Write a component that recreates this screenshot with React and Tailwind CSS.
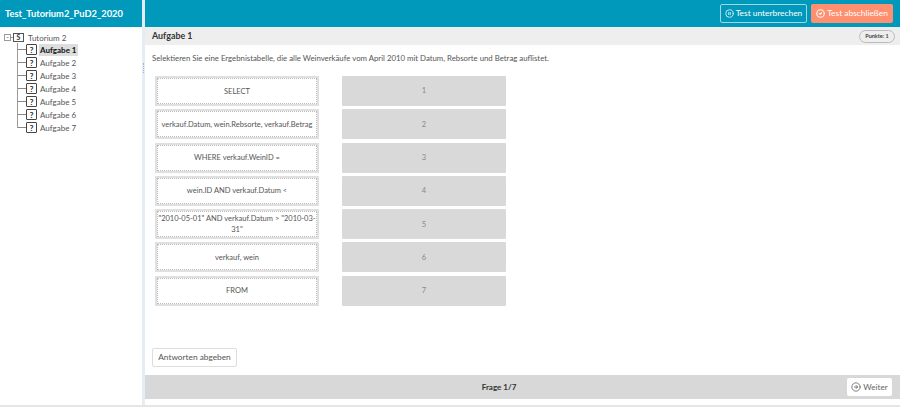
import React from "react";
import { CirclePause, CircleCheck, CircleArrowRight } from "lucide-react";

const font = "font-['Lato','Open_Sans',sans-serif]";

const answers = [
  "SELECT",
  "verkauf.Datum, wein.Rebsorte, verkauf.Betrag",
  "WHERE verkauf.WeinID =",
  "wein.ID AND verkauf.Datum <",
  "\"2010-05-01\" AND verkauf.Datum > \"2010-03-31\"",
  "verkauf, wein",
  "FROM",
];

const questions = ["Aufgabe 1", "Aufgabe 2", "Aufgabe 3", "Aufgabe 4", "Aufgabe 5", "Aufgabe 6", "Aufgabe 7"];

// Tree sidebar with the connector lines
const Tree = () => (
  <div className="pl-[4px] pt-[4px] text-[8px] text-[#555]">
    <div className="flex h-[13px] items-center">
      <span className="flex h-[7px] w-[7px] items-center justify-center border border-[#999] text-[7px] leading-none">-</span>
      <span className="h-px w-[2px] bg-[#999]" />
      <span className="flex h-[9px] w-[11px] items-center justify-center border border-[#555] text-[7px] font-bold leading-none text-[#333]">S</span>
      <span className="ml-[4px]">Tutorium 2</span>
    </div>
    <div className="ml-[13px] mt-[-1px] h-[85px] border-l border-[#999]">
      {questions.map((q, i) => (
        <div key={q} className="flex h-[13px] items-center">
          <span className="h-px w-[8px] bg-[#888]" />
          <span className="flex h-[11px] w-[11px] items-center justify-center rounded-[1px] border border-[#444] bg-white text-[8px] font-bold leading-none text-[#222]">?</span>
          <span className={i === 0 ? "ml-[2px] bg-[#ddd] px-[1px] font-bold text-[#111]" : "ml-[2px] px-[1px]"}>{q}</span>
        </div>
      ))}
    </div>
  </div>
);

export default function App() {
  return (
    <div className={`${font} flex h-[407px] w-[900px] flex-col overflow-hidden bg-white`}>
      <div className="flex h-[405px]">
        {/* Left panel */}
        <div className="w-[142px] shrink-0">
          <div className="flex h-[27px] items-center bg-[#0099bb] pl-[5px] text-[9.3px] font-bold text-white">
            Test_Tutorium2_PuD2_2020
          </div>
          <Tree />
        </div>
        <div className="flex w-[3px] shrink-0 justify-center bg-[#e4ecf5]">
          <span className="mt-[63px] h-[10px] border-l border-dotted border-[#9db4cc]" />
        </div>

        {/* Main panel */}
        <div className="flex min-w-0 flex-1 flex-col">
          <div className="flex h-[27px] items-center justify-end gap-[4px] bg-[#0099bb] pr-[7px] text-[8.4px]">
            <button className="flex h-[19px] w-[87px] items-center justify-center gap-[2px] rounded-[2px] border border-[#9fd6e3] text-white">
              <CirclePause size={9} />
              Test unterbrechen
            </button>
            <button className="flex h-[19px] w-[82px] items-center justify-center gap-[2px] rounded-[2px] bg-[#ff8f6e] text-white">
              <CircleCheck size={9} strokeWidth={3} />
              Test abschließen
            </button>
          </div>

          <div className="flex h-[18px] items-center justify-between bg-[#eeeeee] pl-[7px] pr-[5px]">
            <span className="text-[8.9px] font-bold text-[#333]">Aufgabe 1</span>
            <span className="w-[36px] rounded-full border border-[#bbb] text-center text-[5.5px] font-bold leading-[11px] text-[#444]">Punkte: 1</span>
          </div>

          <p className="ml-[7px] mt-[7px] h-[13px] whitespace-nowrap text-[7.8px] leading-[13px] text-[#555]">
            Selektieren Sie eine Ergebnistabelle, die alle Weinverkäufe vom April 2010 mit Datum, Rebsorte und Betrag auflistet.
          </p>

          <div className="ml-[10px] mt-[11px] flex flex-col gap-[3.3px]">
            {answers.map((a, i) => (
              <div key={a} className="flex gap-[23px]">
                <div className="h-[30px] w-[164px] bg-[#e0e0e0] p-[2px]">
                  <div className="flex h-full items-center justify-center border border-dotted border-[#bbb] bg-white text-center text-[7.5px] leading-[11px] text-[#555]">
                    <span className="-mx-[1px]">{a}</span>
                  </div>
                </div>
                <div className="flex h-[30px] w-[164px] items-center justify-center rounded-[1px] bg-[#d9d9d9] text-[7.5px] text-[#888]">
                  {i + 1}
                </div>
              </div>
            ))}
          </div>

          <div className="ml-[7px] mt-[42px] flex">
            <button className="h-[19px] w-[85px] whitespace-nowrap rounded-[2px] border border-[#ddd] bg-white text-[8.3px] text-[#555]">
              Antworten abgeben
            </button>
          </div>

          <div className="relative mt-[8px] flex h-[24px] items-center justify-center bg-[#d8d8d8] pr-[47px] text-[8px] font-bold text-[#333]">
            Frage 1/7
            <button className="absolute right-[8px] top-[3px] flex h-[18px] w-[45px] items-center justify-center gap-[2px] rounded-[2px] bg-white text-[8.2px] font-normal text-[#666]">
              <CircleArrowRight size={10} />
              Weiter
            </button>
          </div>
        </div>
      </div>
      <div className="h-[2px] bg-[#e5e5e5]" />
    </div>
  );
}
